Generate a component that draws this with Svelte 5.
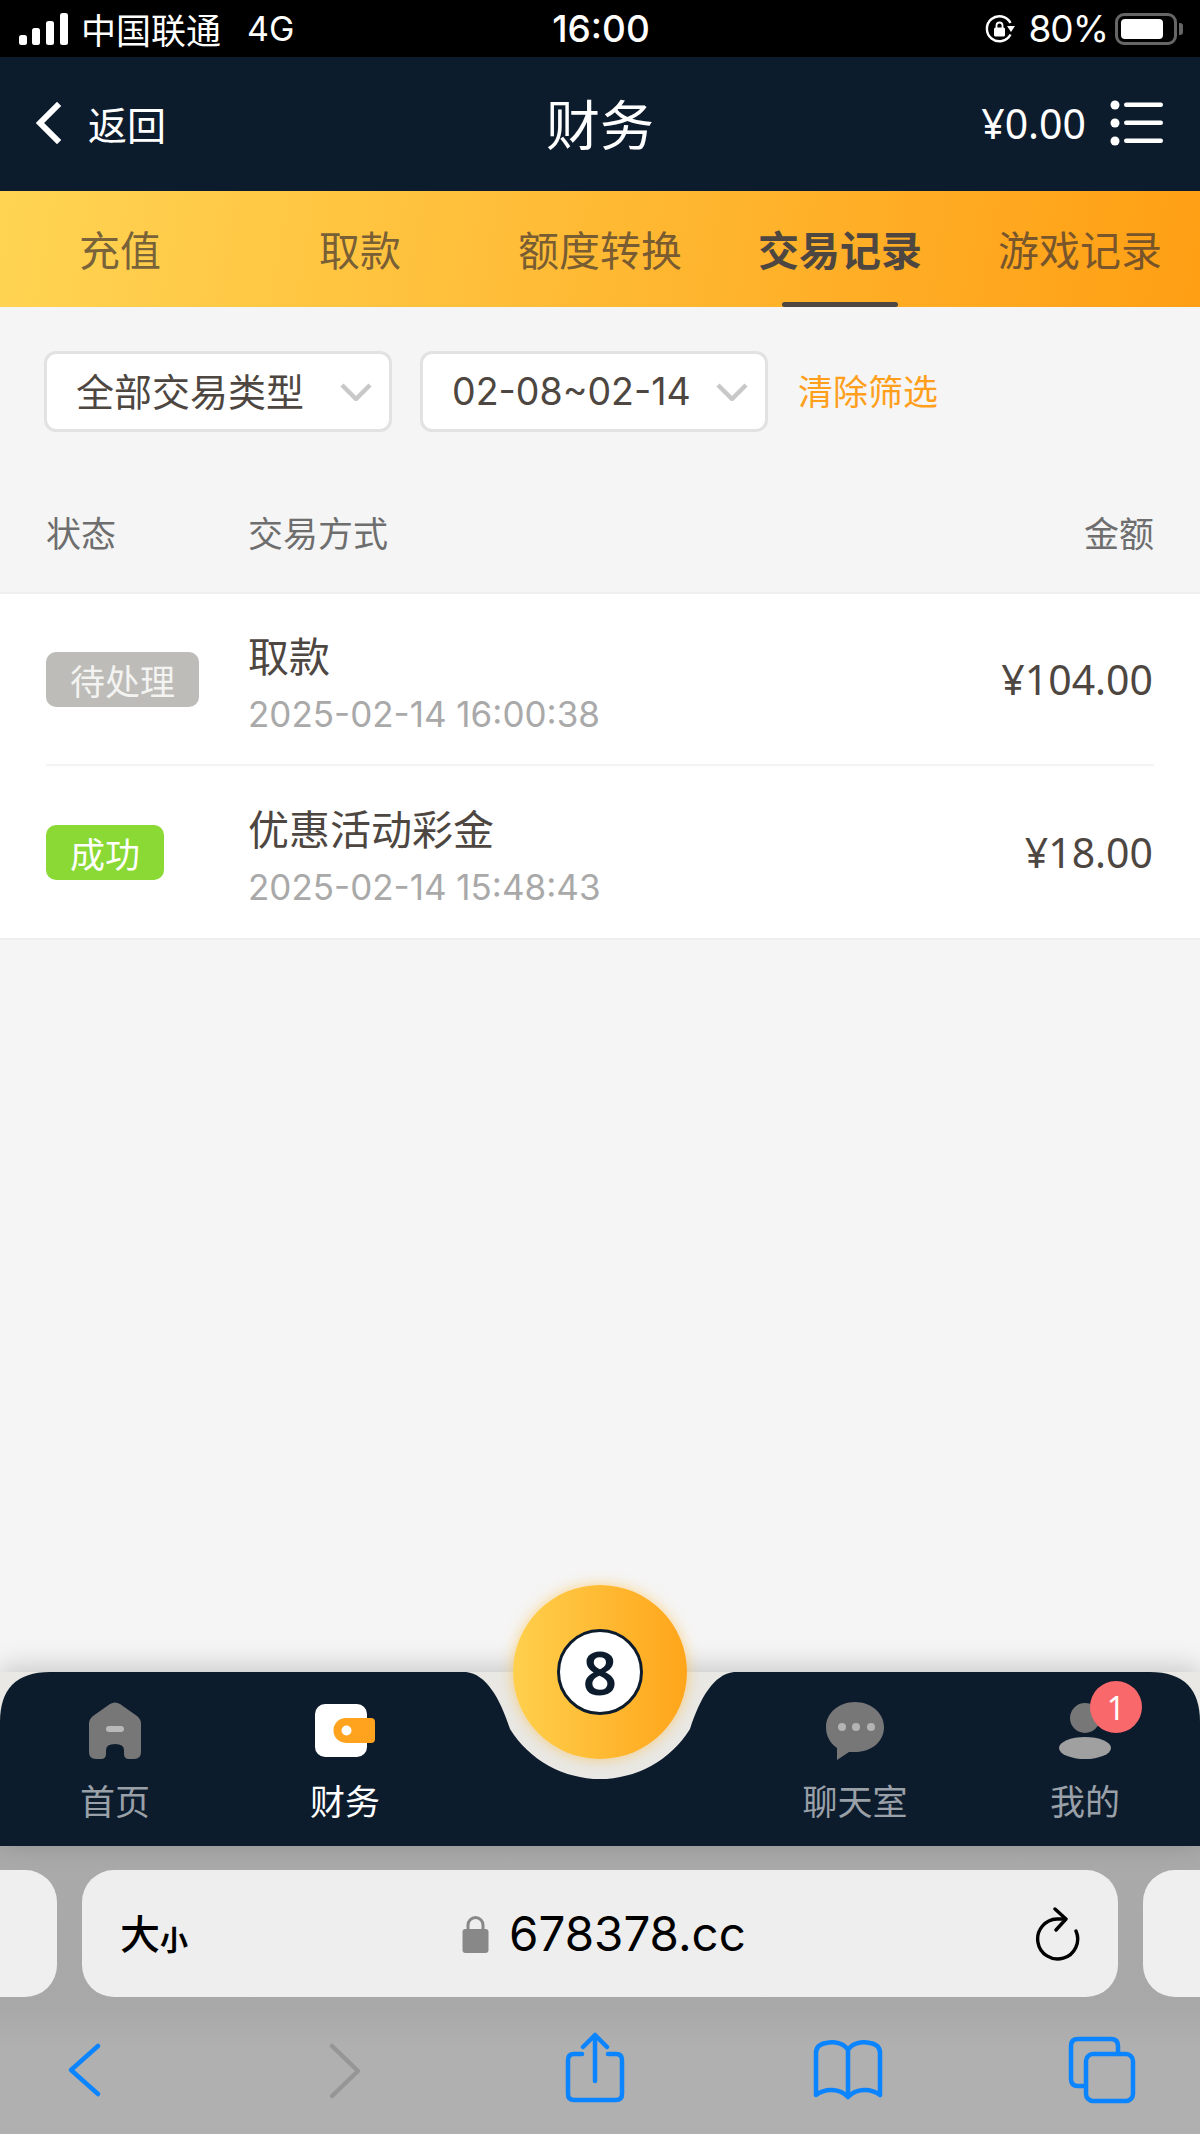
<script>
  const tabs = ['充值', '取款', '额度转换', '交易记录', '游戏记录'];
  const activeTab = '交易记录';

  const records = [
    { status: '待处理', kind: 'pending', name: '取款', time: '2025-02-14 16:00:38', amount: '¥104.00' },
    { status: '成功', kind: 'success', name: '优惠活动彩金', time: '2025-02-14 15:48:43', amount: '¥18.00' }
  ];
</script>

<div class="page">
  <div class="statusbar">
    <div class="status-left">
      <svg class="signal" width="50" height="32" viewBox="0 0 50 32">
        <rect x="0" y="22" width="8" height="10" rx="2.5" />
        <rect x="13" y="15" width="8" height="17" rx="2.5" />
        <rect x="27" y="8" width="8" height="24" rx="2.5" />
        <rect x="41" y="0" width="8" height="32" rx="2.5" />
      </svg>
      <span>中国联通</span>
      <span class="net">4G</span>
    </div>
    <div class="clock">16:00</div>
    <div class="status-right">
      <svg width="32" height="32" viewBox="0 0 32 32">
        <path d="M26.5 21.5A12.5 12.5 0 1 1 26.5 10" fill="none" stroke="#fff" stroke-width="2.4" />
        <path d="M23 13h8l-4 6z" fill="#fff" />
        <rect x="10" y="14.5" width="11" height="9" rx="1.5" fill="#fff" />
        <path d="M12.5 15v-2.5a3 3 0 0 1 6 0V15" fill="none" stroke="#fff" stroke-width="1.8" />
      </svg>
      <span>80%</span>
      <div class="battery"><div class="battery-fill"></div></div>
      <div class="battery-tip"></div>
    </div>
  </div>

  <header class="topbar">
    <div class="back">
      <svg width="28" height="42" viewBox="0 0 28 42">
        <path d="M22 4 L5 21 L22 38" fill="none" stroke="#fff" stroke-width="6" stroke-linecap="square" />
      </svg>
      <span>返回</span>
    </div>
    <h1>财务</h1>
    <div class="balance">
      <span>¥0.00</span>
      <svg width="54" height="46" viewBox="0 0 54 46">
        <circle cx="5" cy="5" r="4.5" />
        <circle cx="5" cy="23" r="4.5" />
        <circle cx="5" cy="41" r="4.5" />
        <rect x="14" y="2.500" width="39" height="4.500" rx="2.200" />
        <rect x="14" y="20.500" width="39" height="4.500" rx="2.200" />
        <rect x="14" y="38.500" width="39" height="4.500" rx="2.200" />
      </svg>
    </div>
  </header>

  <nav class="tabs">
    {#each tabs as tab}
      <div class="tab" class:active={tab === activeTab}>{tab}</div>
    {/each}
  </nav>

  <div class="filters">
    <div class="select type">
      <span>全部交易类型</span>
      <svg width="32" height="18" viewBox="0 0 32 18"><path d="M2 2 L16 16 L30 2" /></svg>
    </div>
    <div class="select range">
      <span class="range-text">02-08~02-14</span>
      <svg width="32" height="18" viewBox="0 0 32 18"><path d="M2 2 L16 16 L30 2" /></svg>
    </div>
    <span class="clear">清除筛选</span>
  </div>

  <div class="table-head">
    <span class="col-status">状态</span>
    <span class="col-name">交易方式</span>
    <span class="col-amount">金额</span>
  </div>

  <div class="list">
    {#each records as rec}
      <div class="row">
        <div class="col-status">
          <span class="badge {rec.kind}">{rec.status}</span>
        </div>
        <div class="col-name">
          <div class="name">{rec.name}</div>
          <div class="time">{rec.time}</div>
        </div>
        <div class="col-amount amount">{rec.amount}</div>
      </div>
    {/each}
  </div>

  <div class="spacer"></div>

  <div class="bottom-nav">
    <svg class="nav-shape" width="1200" height="174" viewBox="0 0 1200 174">
      <path d="M0 174 V50 Q0 0 50 0 H466 C486 2 500 26 510 57 A106 106 0 0 0 690 57 C700 26 714 2 734 0 H1150 Q1200 0 1200 50 V174 Z" fill="#0d1c2d" />
    </svg>

    <div class="nav-item">
      <svg width="54" height="58" viewBox="0 0 54 58">
        <path d="M22 2 Q27 -1 32 2 L49 14 Q53 17 53 22 V50 Q53 57 46 57 H41 Q36 57 36 52 V48 Q36 42 27 42 Q18 42 18 48 V52 Q18 57 13 57 H8 Q1 57 1 50 V22 Q1 17 5 14 Z" fill="#777" />
        <rect x="18" y="24" width="18" height="6" rx="3" fill="#b9b9b9" />
      </svg>
      <span>首页</span>
    </div>
    <div class="nav-item on">
      <svg width="60" height="54" viewBox="0 0 60 54">
        <rect x="0" y="0" width="52" height="53" rx="10" fill="#fff" />
        <path d="M30 14 H56 Q60 14 60 18 V35 Q60 39 56 39 H32 A12.500 12.500 0 0 1 30 14 Z" fill="#ffa31e" />
        <circle cx="31.500" cy="26.500" r="5" fill="#fff" />
      </svg>
      <span>财务</span>
    </div>

    <div class="nav-center">
      <div class="ball">
        <div class="ball-face">8</div>
      </div>
    </div>

    <div class="nav-item">
      <svg width="58" height="58" viewBox="0 0 58 58">
        <path d="M29 0 C45 0 58 11 58 25 C58 40 45 50 29 50 C27 50 25 50 23 50 L11 58 V46 C4 41 0 34 0 25 C0 11 13 0 29 0 Z" fill="#777" />
        <circle cx="16" cy="25" r="4" fill="#b4b4b4" />
        <circle cx="30" cy="25" r="4" fill="#b4b4b4" />
        <circle cx="45" cy="25" r="4" fill="#b4b4b4" />
      </svg>
      <span>聊天室</span>
    </div>
    <div class="nav-item">
      <svg width="54" height="58" viewBox="0 0 54 58">
        <circle cx="27" cy="16" r="15" fill="#777" />
        <ellipse cx="27" cy="46" rx="26" ry="11" fill="#a0a0a0" />
      </svg>
      <span>我的</span>
      <div class="count">1</div>
    </div>
  </div>

  <div class="browser">
    <div class="address-row">
      <div class="side-tab left"></div>
      <div class="address">
        <span class="font-size"><b>大</b><small>小</small></span>
        <div class="host">
          <svg width="27" height="38" viewBox="0 0 27 38">
            <path d="M6 16 V10 a7.500 7.500 0 0 1 15 0 V16" fill="none" stroke="#888" stroke-width="3" />
            <rect x="0.500" y="14" width="26" height="24" rx="3" fill="#888" />
          </svg>
          <span>678378.cc</span>
        </div>
        <svg class="reload" width="46" height="54" viewBox="0 0 46 54">
          <path d="M42 24 A20 20 0 1 1 23 12 L30 12" fill="none" stroke="#000" stroke-width="3.400" stroke-linecap="round" />
          <path d="M21 2 L32 12 L22 23" fill="none" stroke="#000" stroke-width="3.400" stroke-linecap="round" stroke-linejoin="round" />
        </svg>
      </div>
      <div class="side-tab right"></div>
    </div>

    <div class="toolbar">
      <svg width="80" height="80" viewBox="0 0 80 80"><path d="M55 16 L28 40 L55 64" /></svg>
      <svg width="80" height="80" viewBox="0 0 80 80"><path class="off" d="M34 16 L60 41 L34 66" /></svg>
      <svg width="80" height="80" viewBox="0 0 80 80">
        <path d="M30 24 H22 Q16 24 16 30 V64 Q16 70 22 70 H64 Q70 70 70 64 V30 Q70 24 64 24 H56" />
        <path d="M43 51 V5 M31 17 L43 5 L55 17" />
      </svg>
      <svg width="80" height="80" viewBox="0 0 80 80">
        <path d="M41 20 C37 13 27 11 19 13 C13 14 9 17 9 23 V65 C18 58 33 58 41 67 C49 58 64 58 73 65 V23 C73 17 69 14 63 13 C55 11 45 13 41 20 V67" />
      </svg>
      <svg width="80" height="80" viewBox="0 0 80 80">
        <path d="M25 56 H17 Q10 56 10 49 V16 Q10 9 17 9 H50 Q57 9 57 16 V24" />
        <rect x="25" y="24" width="47" height="47" rx="7" />
      </svg>
    </div>
  </div>
</div>

<style>
  :global(body) {
    margin: 0;
    background: #f5f5f5;
  }

  .page {
    width: 1200px;
    height: 2134px;
    display: flex;
    flex-direction: column;
    overflow: hidden;
    background: #f5f5f5;
    color: #4d4641;
    font-family: "Noto Sans", "Noto Sans CJK SC", sans-serif;
  }

  .statusbar {
    height: 57px;
    flex-shrink: 0;
    background: #000;
    color: #fff;
    display: grid;
    grid-template-columns: 1fr auto 1fr;
    align-items: center;
    font-size: 35px;
    padding: 0 14px 0 19px;
  }

  .status-left {
    display: flex;
    align-items: center;
    gap: 12px;
  }

  .signal rect {
    fill: #fff;
  }

  .net {
    margin-left: 14px;
    font-size: 34px;
    font-family: "Inter", sans-serif;
  }

  .clock {
    font-size: 37px;
    font-weight: 500;
    font-family: "Inter", sans-serif;
    padding-right: 3px;
  }

  .status-right {
    display: flex;
    align-items: center;
    justify-content: flex-end;
    gap: 7px;
    padding-right: 3px;
  }

  .status-right > span {
    margin-left: 5px;
    font-size: 37px;
    font-family: "Inter", sans-serif;
    letter-spacing: -1px;
  }

  .battery {
    width: 62px;
    height: 32px;
    border: 3px solid #666;
    border-radius: 9px;
    padding: 3px;
    box-sizing: border-box;
  }

  .battery-fill {
    width: 42px;
    height: 100%;
    background: #fff;
    border-radius: 4px;
  }

  .battery-tip {
    width: 4px;
    height: 12px;
    background: #666;
    border-radius: 0 3px 3px 0;
    margin-left: -5px;
  }

  .topbar {
    height: 134px;
    flex-shrink: 0;
    background: #0d1c2d;
    color: #fff;
    display: flex;
    align-items: center;
    justify-content: space-between;
    padding: 0 37px 2px 35px;
    box-sizing: border-box;
    position: relative;
  }

  .back {
    display: flex;
    align-items: center;
    gap: 25px;
    font-size: 39px;
  }

  .topbar h1 {
    margin: 0 0 2px;
    position: absolute;
    left: 0;
    right: 0;
    text-align: center;
    font-size: 54px;
    font-weight: 400;
    pointer-events: none;
  }

  .balance {
    display: flex;
    align-items: center;
    gap: 24px;
    font-size: 41px;
  }

  .balance svg {
    fill: #fff;
    margin-right: -1px;
  }

  .tabs {
    height: 116px;
    flex-shrink: 0;
    display: flex;
    background: linear-gradient(100deg, #ffd453, #ff9f14);
  }

  .tab {
    flex: 1;
    display: flex;
    align-items: center;
    justify-content: center;
    position: relative;
    font-size: 41px;
    padding-bottom: 3px;
    color: rgba(60, 50, 50, 0.7);
  }

  .tab.active {
    color: #4d4641;
    font-weight: 700;
  }

  .tab.active::after {
    content: '';
    position: absolute;
    left: 62px;
    right: 62px;
    bottom: 0;
    height: 5px;
    border-radius: 3px;
    background: #4d4641;
  }

  .filters {
    display: flex;
    align-items: center;
    margin: 44px 0 0 44px;
  }

  .select {
    height: 81px;
    box-sizing: border-box;
    border: 3px solid #e2e2e2;
    border-radius: 12px;
    background: #fff;
    display: flex;
    align-items: center;
    justify-content: space-between;
    padding: 0 17px 0 29px;
    font-size: 38px;
    white-space: nowrap;
  }

  .select svg path {
    fill: none;
    stroke: #c8c8c8;
    stroke-width: 4.500;
  }

  .select.type {
    width: 348px;
  }

  .select.type span {
    padding-bottom: 4px;
  }

  .select.range {
    width: 348px;
    margin-left: 28px;
  }

  .range-text {
    font-size: 37.500px;
    font-family: "Inter", sans-serif;
  }

  .clear {
    margin-left: 30px;
    font-size: 35px;
    padding-bottom: 5px;
    color: #ff9f1c;
  }

  .table-head {
    height: 117px;
    margin-top: 45px;
    padding: 0 46px 6px;
    box-sizing: border-box;
    display: flex;
    align-items: center;
    font-size: 35px;
    color: #6e6e6e;
    border-bottom: 2px solid #efefef;
  }

  .col-status {
    width: 202px;
    flex-shrink: 0;
  }

  .col-name {
    flex: 1;
    min-width: 0;
    padding-top: 6px;
  }

  .table-head .col-name {
    padding-top: 0;
  }

  .col-amount {
    text-align: right;
  }

  .list {
    background: #fff;
    border-bottom: 2px solid #eee;
    padding: 0 46px;
  }

  .row {
    height: 172px;
    display: flex;
    align-items: center;
    border-bottom: 2px solid #f3f3f3;
    box-sizing: border-box;
  }

  .row:last-child {
    border-bottom: none;
  }

  .badge {
    display: inline-flex;
    align-items: center;
    height: 55px;
    padding: 0 24px;
    border-radius: 10px;
    color: #fff;
    font-size: 35px;
  }

  .badge.pending {
    background: #bdbcb8;
    color: #f3f3f1;
  }

  .badge.success {
    background: #8ad934;
  }

  .name {
    font-size: 41px;
    line-height: 54px;
    color: #4d4641;
  }

  .time {
    font-size: 35px;
    line-height: 44px;
    margin-top: 9px;
    color: #a9a9a9;
    font-family: "Inter", sans-serif;
  }

  .amount {
    font-size: 41px;
    color: #4d4641;
    margin-right: 1px;
  }

  .spacer {
    flex: 1;
  }

  .bottom-nav {
    height: 174px;
    flex-shrink: 0;
    position: relative;
    display: flex;
    background: #e9e8e4;
    box-shadow: 0 -4px 26px rgba(0, 0, 0, 0.2);
  }

  .nav-shape {
    position: absolute;
    left: 0;
    top: 0;
  }

  .nav-item {
    width: 230px;
    position: relative;
    display: flex;
    flex-direction: column;
    align-items: center;
    padding-top: 30px;
    font-size: 35px;
    color: #99a0a8;
  }

  .nav-item svg {
    height: 58px;
  }

  .nav-item span {
    margin-top: 17px;
    line-height: 50px;
  }

  .nav-item.on {
    color: #fff;
  }

  .nav-center {
    width: 280px;
    position: relative;
  }

  .ball {
    position: absolute;
    left: 53px;
    top: -87px;
    width: 174px;
    height: 174px;
    border-radius: 50%;
    background: linear-gradient(90deg, #ffd04d, #ffa51a);
    box-shadow: 0 0 14px rgba(255, 180, 40, 0.55);
    display: flex;
    align-items: center;
    justify-content: center;
  }

  .ball-face {
    width: 86px;
    height: 86px;
    box-sizing: border-box;
    border: 3px solid #0d1c2d;
    border-radius: 50%;
    background: #fff;
    color: #0d1c2d;
    display: flex;
    align-items: center;
    justify-content: center;
    font-size: 60px;
    font-weight: 600;
    font-family: "Noto Sans", sans-serif;
  }

  .count {
    position: absolute;
    left: 120px;
    top: 9px;
    width: 52px;
    height: 52px;
    border-radius: 50%;
    background: #f9686a;
    color: #fff;
    font-size: 32px;
    display: flex;
    align-items: center;
    justify-content: center;
  }

  .browser {
    height: 288px;
    flex-shrink: 0;
    background: linear-gradient(#aaaaaa, #a8a8a8 55%, #b0b0b0 70%);
    display: flex;
    flex-direction: column;
  }

  .address-row {
    display: flex;
    gap: 25px;
    margin-top: 24px;
    height: 127px;
  }

  .side-tab {
    width: 57px;
    background: #efefef;
  }

  .side-tab.left {
    border-radius: 0 32px 32px 0;
  }

  .side-tab.right {
    border-radius: 32px 0 0 32px;
  }

  .address {
    flex: 1;
    background: #eeeeee;
    border-radius: 32px;
    display: flex;
    align-items: center;
    justify-content: space-between;
    padding: 0 38px;
    position: relative;
  }

  .font-size {
    color: #000;
    display: flex;
    align-items: flex-end;
    line-height: 1;
  }

  .font-size b {
    font-size: 40px;
    font-weight: 500;
  }

  .font-size small {
    font-size: 28px;
    font-weight: 700;
  }

  .host {
    position: absolute;
    left: 380px;
    display: flex;
    align-items: center;
    gap: 20px;
    font-size: 47.500px;
    color: #000;
    font-family: "Inter", "Liberation Sans", sans-serif;
  }

  .toolbar {
    display: flex;
    justify-content: space-between;
    padding: 0 59px 0 43px;
    margin-top: 33px;
  }

  .toolbar svg {
    fill: none;
    stroke: #0a84ff;
    stroke-width: 4.500;
    stroke-linecap: round;
    stroke-linejoin: round;
  }

  .toolbar path.off {
    stroke: #969696;
  }
</style>
